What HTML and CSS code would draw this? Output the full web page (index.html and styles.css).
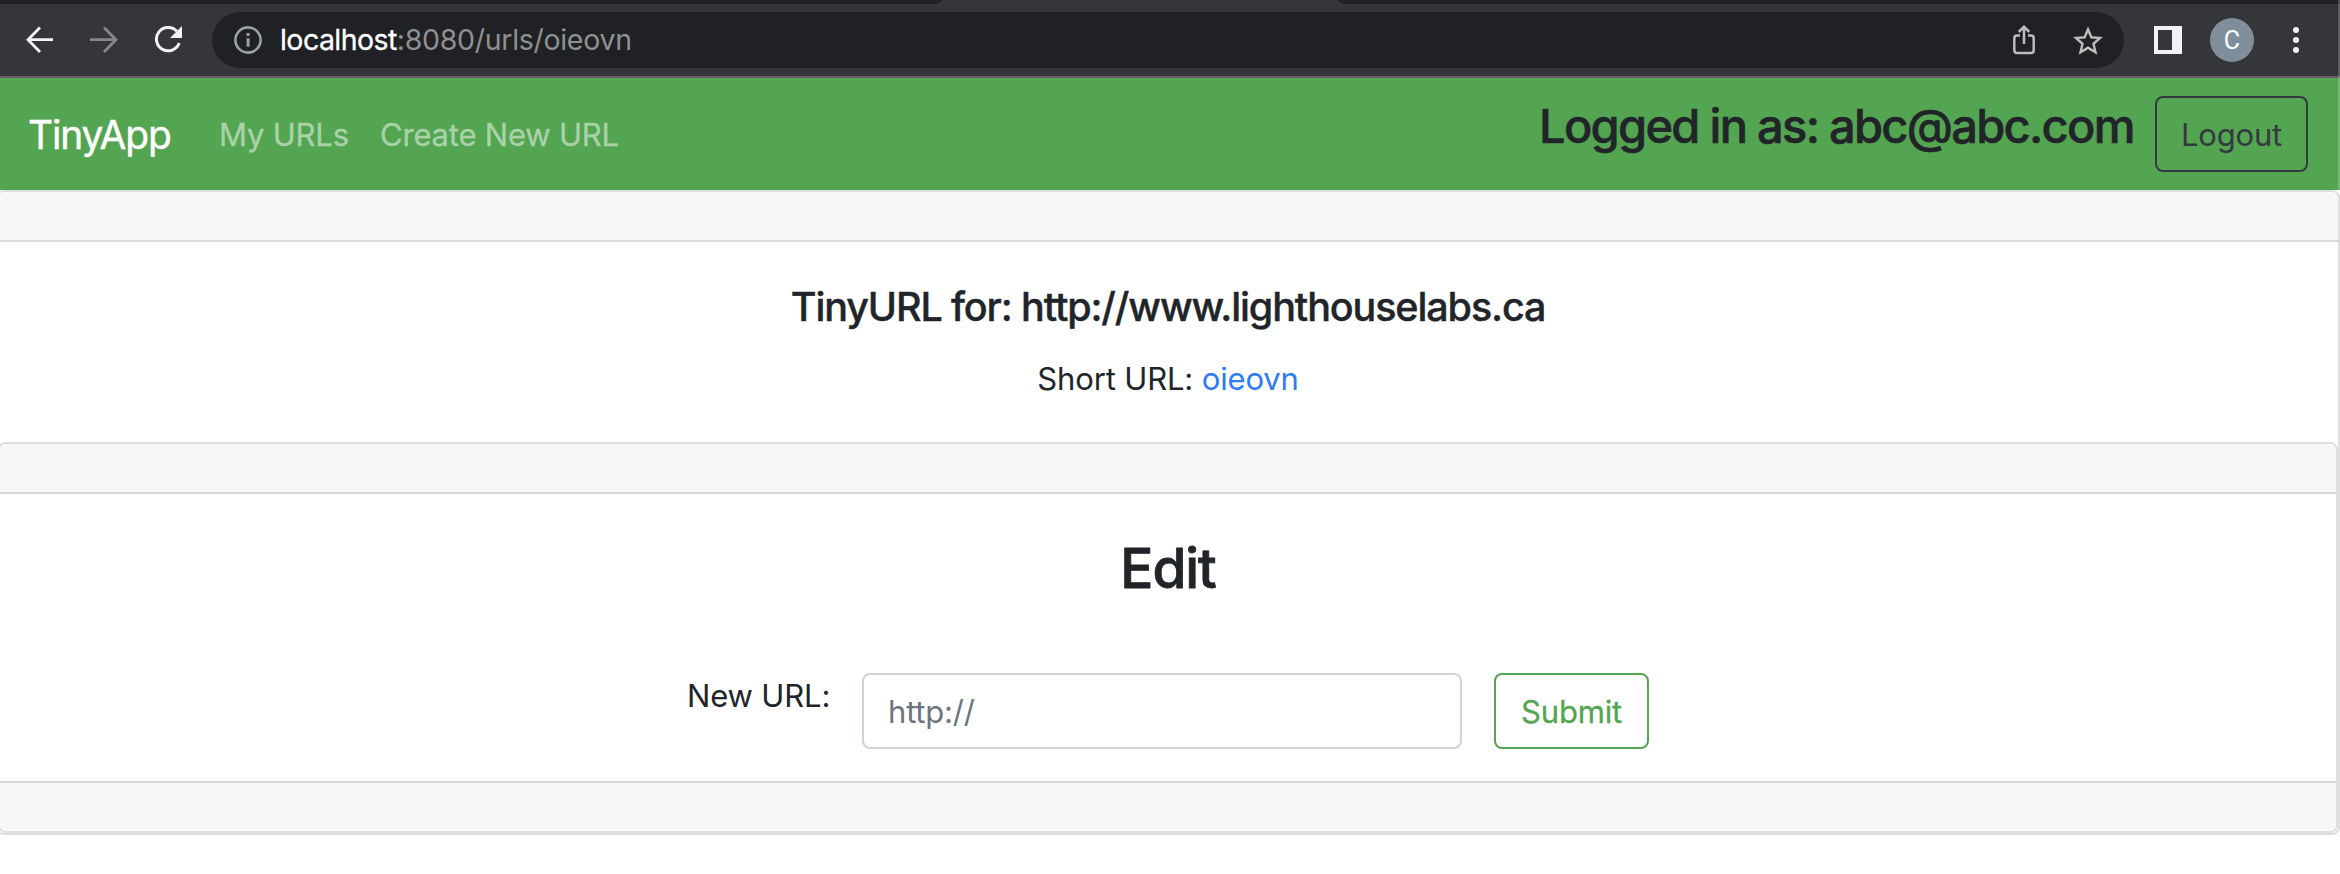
FILE: index.html
```
<!DOCTYPE html>
<html lang="en">
<head>
<meta charset="utf-8">
<title>TinyApp</title>
<link rel="stylesheet" href="styles.css">
</head>
<body>
<div class="browser">
  <div class="tabstrip"><div class="tab-left"></div><div class="tab-right"></div></div>
  <div class="toolbar">
    <svg class="ico back" viewBox="0 0 28 28"><path d="M27 13.7H2.500M14 1.500L2 13.700L14 26" /></svg>
    <svg class="ico forward" viewBox="0 0 28 28"><path d="M0 13.700H25.500M14 1.500L26 13.700L14 26" /></svg>
    <svg class="ico reload" viewBox="0 0 28 28"><path class="arc" d="M22.800 5.200A11.700 11.700 0 1 0 25.200 17" /><path class="tip" d="M28 0V12H16Z" /></svg>
    <div class="omnibox">
      <svg class="ico info" viewBox="0 0 28 28"><circle cx="14" cy="14" r="12.600" /><path class="fill" d="M12.600 7h3v3h-3zM12.600 12.300h3v8.500h-3z" /></svg>
      <div class="address"><span class="host">localhost</span><span class="path">:8080/urls/oieovn</span></div>
      <svg class="ico share" viewBox="0 0 22 30"><path d="M7 10.500H4Q1.300 10.500 1.300 13.200V25Q1.300 28 4 28H18Q20.700 28 20.700 25V13.200Q20.700 10.500 18 10.500H15M11 19V2.500M5.700 7L11 1.800L16.300 7" /></svg>
      <svg class="ico star" viewBox="2 2 20 19"><path d="M22 9.240l-7.190-.62L12 2 9.190 8.630 2 9.240l5.460 4.730L5.820 21 12 17.270 18.180 21l-1.630-7.030L22 9.240zM12 15.400l-3.760 2.270 1-4.280-3.320-2.880 4.380-.38L12 6.100l1.710 4.040 4.380.38-3.320 2.880 1 4.280L12 15.400z" /></svg>
    </div>
    <div class="side-panel"></div>
    <div class="avatar">C</div>
    <div class="menu"><i></i><i></i><i></i></div>
  </div>
  <div class="window-edge"></div>
</div>
<nav class="navbar">
  <a class="brand">TinyApp</a>
  <a class="link my-urls">My URLs</a>
  <a class="link create">Create New URL</a>
  <div class="login">Logged in as: abc@abc.com</div>
  <button class="btn logout">Logout</button>
</nav>
<main class="card outer">
  <div class="card-cap"></div>
  <section class="body summary">
    <h5 class="title">TinyURL for: http://www.lighthouselabs.ca</h5>
    <p class="short">Short URL: <a class="short-link">oieovn</a></p>
  </section>
  <div class="card inner">
    <div class="card-cap"></div>
    <section class="body editor">
      <h3 class="edit">Edit</h3>
      <form class="form">
        <label class="label" for="url">New URL:</label>
        <input class="field" id="url" type="text" placeholder="http://">
        <button class="btn submit" type="button">Submit</button>
      </form>
    </section>
    <div class="card-foot"></div>
  </div>
</main>
</body>
</html>
```
FILE: styles.css
```
* { box-sizing: border-box; }
body { margin: 0; height: 874px; overflow: hidden; background: #fff; color: #212529; font-family: Inter, "Liberation Sans", sans-serif; font-size: 31px; }
h3, h5, p { margin: 0; }
.browser { position: relative; height: 78px; background: #35363a; border-bottom: 2px solid #665e69; }
.tabstrip { height: 4px; display: flex; justify-content: space-between; }
.tab-left, .tab-right { height: 4px; background: #202124; }
.tab-left { width: 942px; border-bottom-right-radius: 8px 4px; }
.tab-right { width: 1002px; border-bottom-left-radius: 8px 4px; }
.window-edge { position: absolute; right: 0; top: 0; width: 2px; height: 190px; background: rgba(255,255,255,.2); }
.toolbar { height: 72px; display: flex; align-items: center; padding-left: 26px; }
.ico { display: block; flex: none; fill: none; stroke-width: 2.8; }
.back, .forward, .reload { width: 28px; height: 28px; }
.back { stroke: #f1f3f4; }
.forward { stroke: #86878a; margin-left: 36px; }
.reload { margin-left: 36px; }
.arc { stroke: #f1f3f4; stroke-width: 3; }
.tip { fill: #f1f3f4; }
.omnibox { display: flex; align-items: center; width: 1912px; height: 56px; margin-left: 30px; padding-left: 22px; border-radius: 28px; background: #202124; }
.info { width: 28px; height: 28px; stroke: #9aa0a6; stroke-width: 2.6; }
.fill { fill: #9aa0a6; stroke: none; }
.address { flex: none; width: 1733px; margin-left: 18px; font-size: 28.500px; line-height: 36px; white-space: nowrap; }
.host { color: #fff; letter-spacing: -.55px; -webkit-text-stroke: .3px; }
.path { color: #8f9092; letter-spacing: -.3px; }
.share { width: 22px; height: 30px; stroke: #bdbdbe; stroke-width: 2.5; }
.star { width: 30px; height: 29px; margin-left: 38px; fill: #bdbdbe; }
.side-panel { width: 28px; height: 28px; margin-left: 30px; border: 4px solid #f1f3f4; border-right-width: 10px; }
.avatar { width: 44px; height: 44px; margin-left: 28px; border-radius: 50%; background: #7e8f9b; color: #fff; font: 25px/45px Roboto, sans-serif; text-align: center; }
.menu { display: flex; flex-direction: column; gap: 4px; margin-left: 39px; }
.menu i { width: 6px; height: 6px; border-radius: 50%; background: #f1f3f4; }
.navbar { height: 112px; display: flex; align-items: flex-start; background: #54a551; padding: 18px 32px 0 28px; white-space: nowrap; }
.brand { width: 191px; color: #fff; font-size: 39px; line-height: 48px; padding-top: 15px; letter-spacing: -1.2px; -webkit-text-stroke: .4px; }
.link { color: #a9d2a8; line-height: 40px; padding-top: 19px; letter-spacing: -.2px; -webkit-text-stroke: .3px; }
.my-urls { width: 161px; }
.create { width: 1159px; }
.login { width: 616px; font-size: 47px; font-weight: 500; line-height: 56px; padding-top: 2px; letter-spacing: -1.7px; -webkit-text-stroke: .6px; }
.btn { height: 76px; padding: 0; border: 2px solid; border-radius: 8px; background: transparent; font: inherit; }
.logout { width: 153px; color: #343a40; letter-spacing: -.2px; }
.card { border: 2px solid #dedede; border-radius: 8px; }
.outer { width: 2344px; height: 645px; margin-left: -4px; }
.card-cap { height: 50px; background: #f7f7f7; border-bottom: 2px solid #d9d9d9; border-radius: 6px 6px 0 0; }
.card-foot { height: 50px; background: #f7f7f7; border-top: 2px solid #d9d9d9; border-radius: 0 0 6px 6px; }
.body { display: flex; flex-direction: column; align-items: center; }
.summary { height: 200px; padding-top: 41px; }
.title { font-size: 39.500px; font-weight: 500; line-height: 48px; letter-spacing: -1.120px; white-space: nowrap; -webkit-text-stroke: .4px; }
.short { margin-top: 28px; line-height: 40px; letter-spacing: -.15px; white-space: nowrap; }
.short-link { color: #2f7bf6; }
.inner { height: 391px; }
.editor { height: 287px; padding-top: 40px; }
.edit { font-size: 55px; font-weight: 500; line-height: 68px; letter-spacing: -1.1px; -webkit-text-stroke: .8px; }
.form { display: flex; align-items: flex-start; width: 962px; margin-top: 71px; }
.label { width: 175px; padding-top: 3px; line-height: 40px; letter-spacing: -.15px; white-space: nowrap; }
.field { width: 600px; height: 76px; border: 2px solid #ced4da; border-radius: 8px; padding: 0 24px; background: #fff; font: inherit; letter-spacing: -.2px; }
.field::placeholder { color: #6c757d; opacity: 1; }
.submit { width: 155px; margin-left: 32px; color: #54a551; letter-spacing: -.2px; -webkit-text-stroke: .3px; }
```
